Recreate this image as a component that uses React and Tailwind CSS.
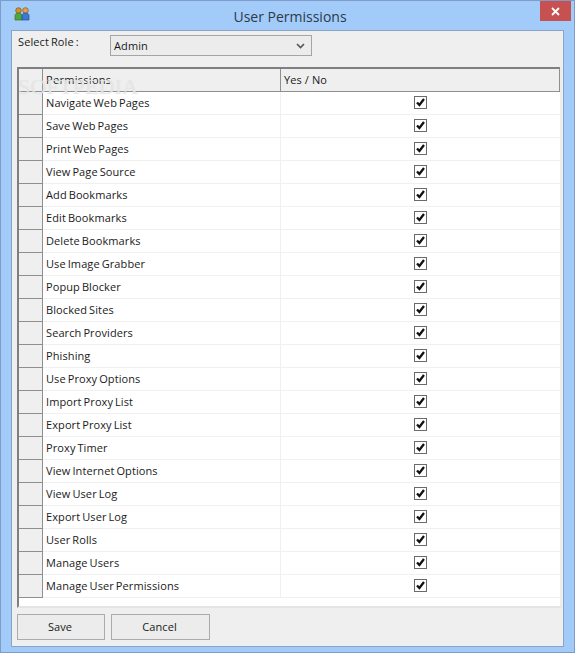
import React from "react";

const permissions = [
  "Navigate Web Pages",
  "Save Web Pages",
  "Print Web Pages",
  "View Page Source",
  "Add Bookmarks",
  "Edit Bookmarks",
  "Delete Bookmarks",
  "Use Image Grabber",
  "Popup Blocker",
  "Blocked Sites",
  "Search Providers",
  "Phishing",
  "Use Proxy Options",
  "Import Proxy List",
  "Export Proxy List",
  "Proxy Timer",
  "View Internet Options",
  "View User Log",
  "Export User Log",
  "User Rolls",
  "Manage Users",
  "Manage User Permissions",
];

const UsersIcon = () => (
  <svg width="16" height="14" viewBox="0 0 16 14">
    <circle cx="4.5" cy="3.5" r="2.8" fill="#d8902c" stroke="#7a5a20" strokeWidth="0.7" />
    <path d="M1 13V8.5C1 7 2.5 6 4.5 6S8 7 8 8.5V13Z" fill="#4aa83c" stroke="#4c6a1c" strokeWidth="0.7" />
    <circle cx="11.5" cy="3.5" r="2.8" fill="#e0a050" stroke="#7a5a20" strokeWidth="0.7" />
    <path d="M8 13V8.5C8 7 9.5 6 11.5 6S15 7 15 8.5V13Z" fill="#3c78d8" stroke="#24508c" strokeWidth="0.7" />
  </svg>
);

const CheckBox = () => (
  <div className="w-[13px] h-[13px] border border-[#6a6a6a] bg-white flex items-center justify-center">
    <svg width="11" height="11" viewBox="0 0 11 11">
      <path d="M2 5.5 L4.4 8 L9 2" fill="none" stroke="#111" strokeWidth="2.3" />
    </svg>
  </div>
);

const App = () => {
  return (
    <div className="w-[575px] h-[653px] bg-[#a2cbf9] border border-[#7d9ccb] flex flex-col font-['Open_Sans','Liberation_Sans',sans-serif] text-[11px] tracking-[0.1px] [word-spacing:-1px] text-[#1a1a1a] overflow-hidden">
      {/* Title bar */}
      <div className="h-[29px] shrink-0 flex items-start">
        <div className="pl-[13px] pt-[6px]">
          <UsersIcon />
        </div>
        <div className="flex-1 text-center text-[14px] tracking-normal [word-spacing:0] text-[#2b3a4c] pt-[5px] pl-[10px]">
          User Permissions
        </div>
        <div className="w-[31px] h-[20px] bg-[#c75050] mr-[3px] flex items-center justify-center">
          <svg width="9" height="9" viewBox="0 0 9 9">
            <path d="M1 1 L8 8 M8 1 L1 8" stroke="#fff" strokeWidth="1.8" />
          </svg>
        </div>
      </div>

      {/* Client area */}
      <div className="flex-1 mx-[10px] mb-[5px] bg-[#efefef] border border-[#8ba3c4] flex flex-col px-[5px]">
        <div className="h-[36px] shrink-0 flex items-start">
          <span className="w-[93px] pl-[1px] pt-[3px]">Select Role :</span>
          <div className="w-[202px] h-[21px] mt-[4px] bg-[#ececec] border border-[#a5a5a5] flex items-center justify-between pl-[3px] pr-[6px]">
            <span className="pt-[1px]">Admin</span>
            <svg width="9" height="6" viewBox="0 0 9 6">
              <path d="M1 1 L4.5 4.5 L8 1" fill="none" stroke="#555" strokeWidth="1.6" />
            </svg>
          </div>
        </div>

        {/* Grid */}
        <div className="w-[545px] h-[541px] shrink-0 bg-white border-l-2 border-l-[#7f7f7f] border-r-2 border-r-[#ececec] border-b-2 border-b-[#e4e4e4] relative">
          <div className="h-[25px] flex bg-[#efefef] border-t-2 border-t-[#7f7f7f] border-b border-b-[#8f8f8f] border-r border-r-[#8f8f8f]">
            <div className="w-[24px] border-r border-[#8f8f8f]"></div>
            <div className="w-[238px] pl-[3px] pt-[3px] border-r border-[#8f8f8f] tracking-[0.3px]">Permissions</div>
            <div className="flex-1 pl-[3px] pt-[3px] [word-spacing:0]">Yes / No</div>
          </div>
          {permissions.map((name) => (
            <div key={name} className="h-[23px] flex">
              <div className="w-[24px] bg-[#efefef] border-r border-b border-[#8f8f8f]"></div>
              <div className="w-[238px] pl-[3px] pt-[3px] border-b border-r border-[#f0f0f0]">{name}</div>
              <div className="flex-1 border-b border-[#f0f0f0] flex items-center pl-[133px] pb-[2px]">
                <CheckBox />
              </div>
            </div>
          ))}
          {/* Watermark */}
          <div className="absolute left-[-1px] top-[3px] font-['Liberation_Serif',serif] text-[22px] tracking-[0.2px] [word-spacing:0] text-white/40 pointer-events-none [text-shadow:0_0_1px_#d4d4d4]">
            SOFTPEDIA
          </div>
        </div>

        <div className="flex gap-[6px] mt-[6px]">
          <div className="w-[88px] h-[26px] bg-[#ececec] border border-[#ababab] flex items-center justify-center pr-[2px]">Save</div>
          <div className="w-[99px] h-[26px] bg-[#ececec] border border-[#ababab] flex items-center justify-center pr-[2px]">Cancel</div>
        </div>
      </div>
    </div>
  );
};

export default App;
